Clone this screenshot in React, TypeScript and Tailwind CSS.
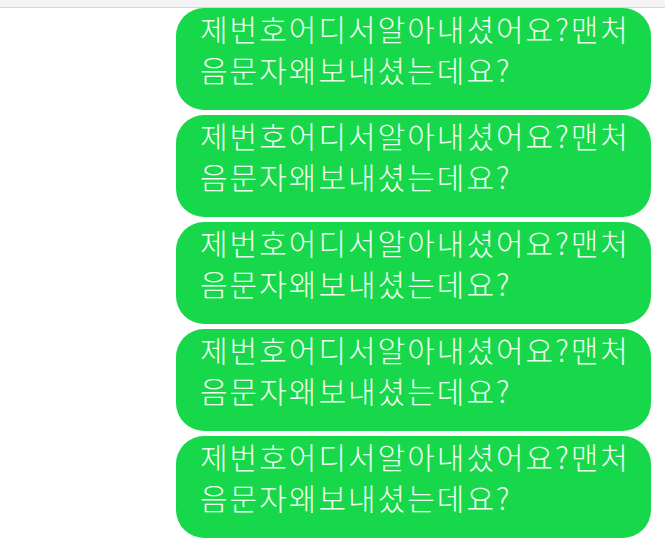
const message = ['제번호어디서알아내셨어요?맨처', '음문자왜보내셨는데요?'];

function Bubble() {
  return (
    <div className="h-[102px] w-[475px] whitespace-nowrap rounded-[28px] bg-[#17d84a] pl-6 pt-0 text-[30px] font-light leading-[41px] tracking-[2px] text-[#effff0]">
      {message[0]}
      <br />
      {message[1]}
    </div>
  );
}

export default function App() {
  return (
    <div
      className="h-[542px] w-[665px] overflow-hidden bg-white"
      style={{ fontFamily: '"Noto Sans CJK KR", "Noto Sans", sans-serif' }}
    >
      <div className="h-[8px] border-b border-[#d6d6d6] bg-[#f3f3f3]" />
      <div className="flex flex-col items-start gap-[5px] pl-[176px]">
        {[0, 1, 2, 3, 4].map((i) => (
          <Bubble key={i} />
        ))}
      </div>
    </div>
  );
}
